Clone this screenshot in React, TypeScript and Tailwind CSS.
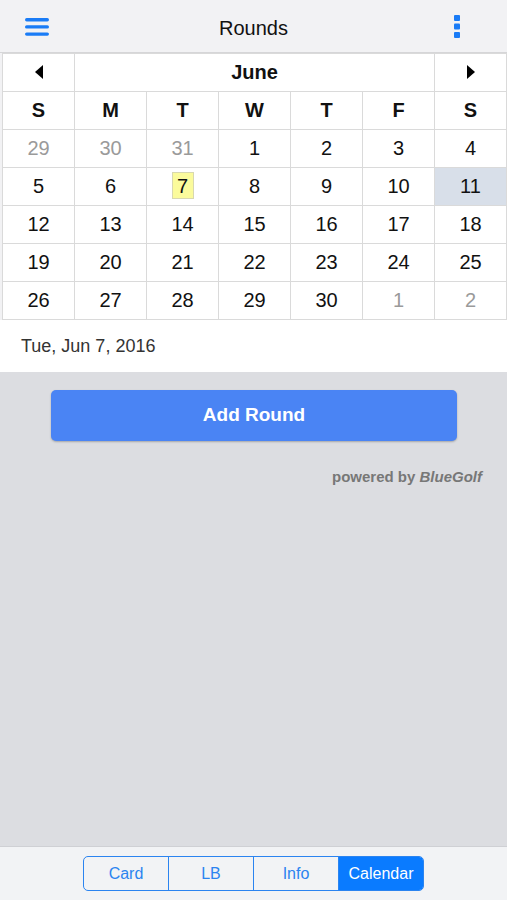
import { useState } from 'react'

const font = { fontFamily: '"Liberation Sans", Arial, sans-serif' }

const weekdays = ['S', 'M', 'T', 'W', 'T', 'F', 'S']

// june 2016, padded with the tail of may and the head of july
const weeks: { n: number; muted?: boolean }[][] = [
  [{ n: 29, muted: true }, { n: 30, muted: true }, { n: 31, muted: true }, { n: 1 }, { n: 2 }, { n: 3 }, { n: 4 }],
  [{ n: 5 }, { n: 6 }, { n: 7 }, { n: 8 }, { n: 9 }, { n: 10 }, { n: 11 }],
  [{ n: 12 }, { n: 13 }, { n: 14 }, { n: 15 }, { n: 16 }, { n: 17 }, { n: 18 }],
  [{ n: 19 }, { n: 20 }, { n: 21 }, { n: 22 }, { n: 23 }, { n: 24 }, { n: 25 }],
  [{ n: 26 }, { n: 27 }, { n: 28 }, { n: 29 }, { n: 30 }, { n: 1, muted: true }, { n: 2, muted: true }],
]

const tabs = ['Card', 'LB', 'Info', 'Calendar']

function Header() {
  return (
    <div className="grid h-[53px] grid-cols-[1fr_auto_1fr] items-center border-b border-[#d6d6d8] bg-[#f2f2f4] px-[25px]">
      <svg width="24" height="18" viewBox="0 0 24 18" className="mt-[2px]">
        <rect x="0" y="0" width="24" height="3.4" rx="1.7" fill="#1a7cf6" />
        <rect x="0" y="7.2" width="24" height="3.4" rx="1.7" fill="#1a7cf6" />
        <rect x="0" y="14.4" width="24" height="3.4" rx="1.7" fill="#1a7cf6" />
      </svg>
      <span className="mt-[3px] text-[20px] text-[#111]">Rounds</span>
      <svg width="7" height="23" viewBox="0 0 7 23" className="mr-[21px] justify-self-end">
        <rect x="0" y="0" width="6" height="6" rx="1" fill="#1a7cf6" />
        <rect x="0" y="8.5" width="6" height="6" rx="1" fill="#1a7cf6" />
        <rect x="0" y="17" width="6" height="6" rx="1" fill="#1a7cf6" />
      </svg>
    </div>
  )
}

function Calendar() {
  const cell = 'h-[38px] border border-[#dadada] p-0 pb-[2px] text-center align-middle'
  return (
    <div className="bg-[#f2f2f4] pl-[2px]">
      <table className="w-[505px] table-fixed border-collapse bg-white">
        <tbody>
          <tr>
            <td className={cell}>
              <span className="inline-block border-y-[7px] border-r-[8px] border-y-transparent border-r-black align-middle" />
            </td>
            <td colSpan={5} className={`${cell} text-[20px] font-bold text-[#111]`}>
              June
            </td>
            <td className={cell}>
              <span className="inline-block border-y-[7px] border-l-[8px] border-y-transparent border-l-black align-middle" />
            </td>
          </tr>
          <tr>
            {weekdays.map((d, i) => (
              <td key={i} className={`${cell} text-[20px] font-bold text-[#111]`}>
                {d}
              </td>
            ))}
          </tr>
          {weeks.map((w, wi) => (
            <tr key={wi}>
              {w.map((d, di) => {
                const isToday = wi === 1 && di === 2
                const isSel = wi === 1 && di === 6
                return (
                  <td
                    key={di}
                    className={`${cell} text-[20px] ${d.muted ? 'text-[#9a9a9a]' : 'text-[#111]'} ${
                      isSel ? 'bg-[#d8dfe9]' : ''
                    }`}
                  >
                    {isToday ? (
                      <span className="inline-flex h-[27px] w-[22px] items-center justify-center border border-[#d8d8b0] bg-[#fbfb9c]">
                        {d.n}
                      </span>
                    ) : (
                      d.n
                    )}
                  </td>
                )
              })}
            </tr>
          ))}
        </tbody>
      </table>
    </div>
  )
}

export default function App() {
  const [tab, setTab] = useState('Calendar')
  return (
    <div className="flex h-[900px] w-[507px] flex-col bg-[#dcdde1]" style={font}>
      <Header />
      <Calendar />
      <div className="flex h-[52px] items-center bg-white pl-[21px] text-[18px] text-[#333]">Tue, Jun 7, 2016</div>
      <div className="flex flex-1 flex-col pl-[51px] pr-[50px] pt-[18px]">
        <button
          type="button"
          className="h-[51px] w-full rounded-[5px] bg-[#4a84f4] text-[19px] font-bold text-white shadow-[0_1px_2px_rgba(0,0,0,0.25)]"
        >
          Add Round
        </button>
        <div className="mr-[-25px] mt-[25px] text-right text-[15px] font-bold text-[#777]">
          powered by <i>BlueGolf</i>
        </div>
      </div>
      <div className="flex h-[54px] items-center justify-center border-t border-[#cfd0d4] bg-[#f2f3f5]">
        <div className="flex h-[35px] w-[341px] overflow-hidden rounded-[5px] border border-[#2b84f0]">
          {tabs.map((t, i) => (
            <button
              key={t}
              type="button"
              onClick={() => setTab(t)}
              className={`flex-1 text-[16px] ${i > 0 ? 'border-l border-[#2b84f0]' : ''} ${
                tab === t ? 'bg-[#0a7bff] text-white' : 'text-[#2b84f0]'
              }`}
            >
              {t}
            </button>
          ))}
        </div>
      </div>
    </div>
  )
}
